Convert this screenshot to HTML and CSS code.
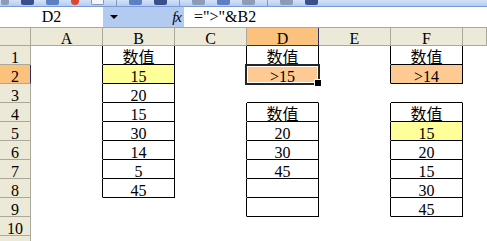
FILE: index.html
```html
<!DOCTYPE html>
<html lang="zh-CN">
<head>
    <meta charset="UTF-8">
    <title>数值</title>
<link rel="stylesheet" href="styles.css">
</head>
<body>
    <div class="toolbar">
        <span class="tb gray" style="width:8px"></span>
        <span class="tb navy"></span>
        <span class="tb blue"></span>
        <span class="tb red"></span>
        <span class="tb white"></span>
        <span class="sep"></span>
        <span class="tb blue"></span>
        <span class="tb navy"></span>
        <span class="sep"></span>
        <span class="tb gray"></span>
        <span class="tb blue"></span>
        <span class="tb gray"></span>
        <span class="sep"></span>
        <span class="tb gray"></span>
        <span class="tb navy"></span>
    </div>

    <div class="formula-bar">
        <div class="name-box">D2</div>
        <div class="fx-area">
            <span class="arrow"></span>
            <i class="fx">fx</i>
        </div>
        <div class="formula">=">"&amp;B2</div>
    </div>

    <div class="sheet">
        <!-- header -->
        <div class="hdr corner"></div>
        <div class="hdr">A</div>
        <div class="hdr">B</div>
        <div class="hdr">C</div>
        <div class="hdr on">D</div>
        <div class="hdr">E</div>
        <div class="hdr">F</div>
        <div class="hdr"></div>

        <!-- 1 -->
        <div class="rh">1</div>
        <div class="c r"></div>
        <div class="c r b">数值</div>
        <div class="c r"></div>
        <div class="c r b">数值</div>
        <div class="c r"></div>
        <div class="c r b">数值</div>
        <div class="c"></div>

        <!-- 2 -->
        <div class="rh on">2</div>
        <div class="c r"></div>
        <div class="c r b y">15</div>
        <div class="c r"></div>
        <div class="c r b o sel">&gt;15</div>
        <div class="c r"></div>
        <div class="c r b o">&gt;14</div>
        <div class="c"></div>

        <!-- 3 -->
        <div class="rh">3</div>
        <div class="c r"></div>
        <div class="c r b">20</div>
        <div class="c"></div>
        <div class="c b"></div>
        <div class="c"></div>
        <div class="c b"></div>
        <div class="c"></div>

        <!-- 4 -->
        <div class="rh">4</div>
        <div class="c r"></div>
        <div class="c r b">15</div>
        <div class="c r"></div>
        <div class="c r b">数值</div>
        <div class="c r"></div>
        <div class="c r b">数值</div>
        <div class="c"></div>

        <!-- 5 -->
        <div class="rh">5</div>
        <div class="c r"></div>
        <div class="c r b">30</div>
        <div class="c r"></div>
        <div class="c r b">20</div>
        <div class="c r"></div>
        <div class="c r b y">15</div>
        <div class="c"></div>

        <!-- 6 -->
        <div class="rh">6</div>
        <div class="c r"></div>
        <div class="c r b">14</div>
        <div class="c r"></div>
        <div class="c r b">30</div>
        <div class="c r"></div>
        <div class="c r b">20</div>
        <div class="c"></div>

        <!-- 7 -->
        <div class="rh">7</div>
        <div class="c r"></div>
        <div class="c r b">5</div>
        <div class="c r"></div>
        <div class="c r b">45</div>
        <div class="c r"></div>
        <div class="c r b">15</div>
        <div class="c"></div>

        <!-- 8 -->
        <div class="rh">8</div>
        <div class="c r"></div>
        <div class="c r b">45</div>
        <div class="c r"></div>
        <div class="c r b"></div>
        <div class="c r"></div>
        <div class="c r b">30</div>
        <div class="c"></div>

        <!-- 9 -->
        <div class="rh">9</div>
        <div class="c"></div>
        <div class="c"></div>
        <div class="c r"></div>
        <div class="c r b"></div>
        <div class="c r"></div>
        <div class="c r b">45</div>
        <div class="c"></div>

        <!-- 10 -->
        <div class="rh">10</div>
        <div class="c"></div>
        <div class="c"></div>
        <div class="c"></div>
        <div class="c"></div>
        <div class="c"></div>
        <div class="c"></div>
        <div class="c"></div>

        <!-- 11, cut by the window -->
        <div class="rh"></div>
        <div class="c"></div>
        <div class="c"></div>
        <div class="c"></div>
        <div class="c"></div>
        <div class="c"></div>
        <div class="c"></div>
        <div class="c"></div>
    </div>
</body>
</html>
```

FILE: styles.css
```css
*{
    margin: 0;
    box-sizing: border-box;
}
body{
    width: 487px;
    height: 241px;
    overflow: hidden;
    background-color: #fff;
    font-family: "Liberation Serif", "Noto Sans CJK SC", serif;
    font-size: 16px;
    color: #000;
}

/* toolbar strip at the top */
.toolbar{
    height: 7px;
    display: flex;
    align-items: flex-start;
    gap: 12px;
    padding-left: 1px;
    background: linear-gradient(#d3e2fa, #b5cbf0);
    border-bottom: 1px solid #7a9cd6;
}
.tb{
    width: 13px;
    height: 5px;
    border-radius: 0 0 2px 2px;
}
.tb.gray{ background-color: #8e9bb5; }
.tb.navy{ background-color: #3a4f8c; }
.tb.blue{ background-color: #5f7fc4; }
.tb.red{ background-color: #d9482e; width: 8px; border-radius: 0 0 4px 4px; }
.tb.white{ background-color: #f4f6fb; border: 1px solid #8a97b3; border-top: none; }
.sep{
    width: 1px;
    height: 6px;
    background-color: #7f99c9;
}

/* formula bar */
.formula-bar{
    height: 20px;
    display: flex;
    line-height: 20px;
}
.name-box{
    width: 103px;
    text-align: center;
}
.fx-area{
    width: 81px;
    display: flex;
    align-items: center;
    justify-content: space-between;
    padding: 0 3px 0 7px;
    background-color: #b4cbf1;
}
.arrow{
    width: 0;
    height: 0;
    border-left: 4px solid transparent;
    border-right: 4px solid transparent;
    border-top: 4px solid #000;
}
.fx{
    font-size: 15px;
    letter-spacing: -1px;
}
.formula{
    padding-left: 10px;
}

/* sheet grid */
.sheet{
    display: grid;
    grid-template-columns: 31px repeat(6, 72px) 1fr;
    grid-template-rows: 18px;
    grid-auto-rows: 19px;
    border-top: 1px solid #aca899;
}
.hdr, .rh{
    background-color: #ece9d8;
    border-right: 1px solid #aca899;
    border-bottom: 1px solid #aca899;
    text-align: center;
    line-height: 21px;
    overflow: hidden;
}
.rh{
    line-height: 23px;
}
.hdr.on{
    background-color: #fbc27e;
    border-right-color: #2e2e62;
    border-bottom-color: #2e2e62;
}
.rh.on{
    background-color: #fbc27e;
    border-right-color: #2e2e62;
}

.c{
    border-right: 1px solid transparent;
    border-bottom: 1px solid transparent;
    text-align: center;
    line-height: 23px;
    overflow: hidden;
}
.r{ border-right-color: #000; }
.b{ border-bottom-color: #000; }
.y{ background-color: #ffff99; }
.o{ background-color: #ffc993; }

/* active cell frame and fill handle */
.sel{
    position: relative;
    overflow: visible;
}
.sel::after{
    content: "";
    position: absolute;
    left: -2px;
    top: -1px;
    right: -2px;
    bottom: -2px;
    border: 2px solid #262626;
    box-shadow: inset 0 0 0 1px #fff;
}
.sel::before{
    content: "";
    position: absolute;
    right: -4px;
    bottom: -4px;
    width: 6px;
    height: 6px;
    background-color: #000;
    border: 1px solid #fff;
    z-index: 1;
}
```
